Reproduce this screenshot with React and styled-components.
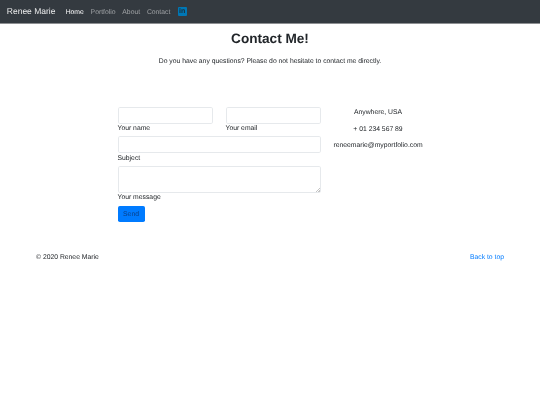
import React from "react";
import styled, { createGlobalStyle } from "styled-components";

const GlobalStyle = createGlobalStyle`
  body {
    margin: 0;
    background: #fff;
    color: #212529;
    font-family: "Liberation Sans", Arial, sans-serif;
    font-size: 6.8px;
    line-height: 1.5;
    text-rendering: geometricPrecision;
  }
  #root {
    filter: blur(0.3px);
  }
`;

const Navbar = styled.nav`
  display: flex;
  align-items: center;
  height: 23px;
  padding: 0 6.8px;
  background: #343a40;
  border-bottom: 1px solid #8d8f92;
`;

const Brand = styled.a`
  margin-right: 10.2px;
  font-size: 8.5px;
  color: #fff;
  opacity: 0.9;
`;

const NavLink = styled.a`
  margin-right: 6.8px;
  padding-top: 4px;
  font-size: 6.8px;
  color: ${(p) => (p.$active ? "#fff" : "rgba(255, 255, 255, 0.5)")};
`;

const Linkedin = styled.span`
  display: flex;
  align-items: center;
  justify-content: center;
  width: 9px;
  height: 9px;
  margin-left: 0.5px;
  border-radius: 1px;
  background: #0077b5;
  color: #1c2a33;
  font-size: 7px;
  font-weight: bold;
  line-height: 1;
`;

const Main = styled.main`
  display: flex;
  flex-direction: column;
  align-items: center;
`;

const Title = styled.h1`
  margin: 6px 0 0;
  font-size: 13.6px;
  line-height: 17px;
  font-weight: bold;
`;

const Intro = styled.p`
  margin: 9px 0 0;
  line-height: 11px;
`;

const ContactRow = styled.div`
  display: flex;
  width: 305px;
  margin-top: 39.5px;
  gap: 13px;
`;

const Form = styled.form`
  display: flex;
  flex-direction: column;
  align-items: flex-start;
  width: 203.5px;
`;

const Fields = styled.div`
  display: grid;
  grid-template-columns: 95.5px 95.5px;
  column-gap: 12.5px;
  width: 100%;
`;

const Field = styled.label`
  display: block;
  grid-column: ${(p) => (p.$wide ? "1 / -1" : "auto")};
  margin-bottom: 2px;
`;

const Input = styled.input`
  display: block;
  box-sizing: border-box;
  width: 100%;
  height: 17px;
  border: 1px solid #e6e9ec;
  border-radius: 1.8px;
  background: #fff;
`;

const Message = styled.textarea`
  display: block;
  box-sizing: border-box;
  width: 100%;
  height: 27px;
  border: 1px solid #e6e9ec;
  border-radius: 1.8px;
  background: #fff;
  &::-webkit-resizer {
    background: linear-gradient(
        135deg,
        transparent 45%,
        #c4c4c4 45%,
        #c4c4c4 60%,
        transparent 60%,
        transparent 75%,
        #c4c4c4 75%,
        #c4c4c4 90%,
        transparent 90%
      )
      right bottom / 4px 4px no-repeat;
  }
`;

const Caption = styled.span`
  display: block;
  padding-top: 0.5px;
  line-height: 10px;
`;

const SendButton = styled.button`
  width: 27px;
  height: 16px;
  margin-top: 1px;
  padding: 0;
  border: 0;
  border-radius: 1.8px;
  background: #007bff;
  color: #0a3f86;
  font-family: inherit;
  font-size: 6.8px;
  text-rendering: geometricPrecision;
`;

const Info = styled.ul`
  display: flex;
  flex-direction: column;
  align-items: center;
  gap: 6.5px;
  width: 88px;
  margin: 0;
  padding: 0;
  padding-top: 1.5px;
  list-style: none;
`;

const InfoItem = styled.li`
  white-space: nowrap;
  line-height: 10px;
`;

const Footer = styled.footer`
  display: flex;
  justify-content: space-between;
  margin-top: 30px;
  padding: 0 36px;
  line-height: 11px;
`;

const TopLink = styled.a`
  color: #007bff;
`;

export default function App() {
  return (
    <>
      <GlobalStyle />
      <Navbar>
        <Brand>Renee Marie</Brand>
        <NavLink $active>Home</NavLink>
        <NavLink>Portfolio</NavLink>
        <NavLink>About</NavLink>
        <NavLink>Contact</NavLink>
        <Linkedin>in</Linkedin>
      </Navbar>
      <Main>
        <Title>Contact Me!</Title>
        <Intro>Do you have any questions? Please do not hesitate to contact me directly.</Intro>
        <ContactRow>
          <Form>
            <Fields>
              <Field>
                <Input />
                <Caption>Your name</Caption>
              </Field>
              <Field>
                <Input />
                <Caption>Your email</Caption>
              </Field>
              <Field $wide>
                <Input />
                <Caption>Subject</Caption>
              </Field>
              <Field $wide>
                <Message />
                <Caption>Your message</Caption>
              </Field>
            </Fields>
            <SendButton type="button">Send</SendButton>
          </Form>
          <Info>
            <InfoItem>Anywhere, USA</InfoItem>
            <InfoItem>+ 01 234 567 89</InfoItem>
            <InfoItem>reneemarie@myportfolio.com</InfoItem>
          </Info>
        </ContactRow>
      </Main>
      <Footer>
        <span>© 2020 Renee Marie</span>
        <TopLink>Back to top</TopLink>
      </Footer>
    </>
  );
}
